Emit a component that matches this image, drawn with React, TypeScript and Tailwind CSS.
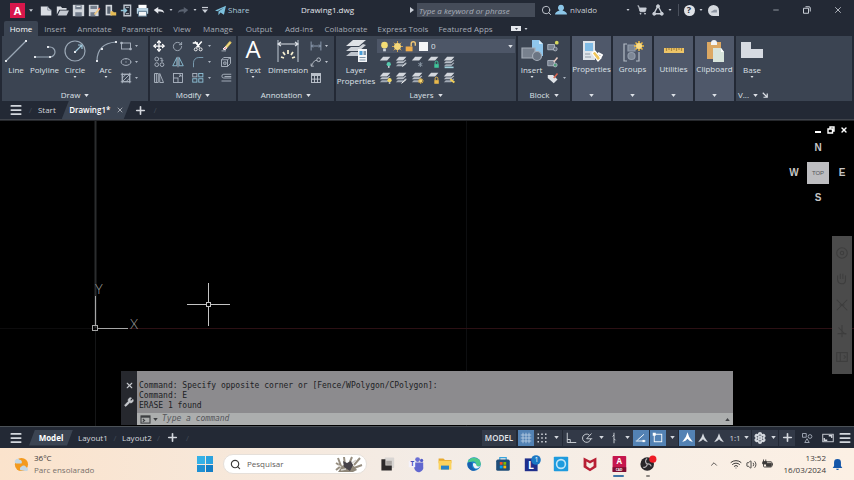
import type { ReactNode } from 'react';
import { Menu, Plus, X, Search, ShoppingCart, Move, RotateCw, Wifi, Volume2, Settings, Wrench, ChevronUp, Minus } from 'lucide-react';

const ribbonTabs = [
  { label: 'Home', width: 'w-[34px]' },
  { label: 'Insert', width: 'w-[34px]' },
  { label: 'Annotate', width: 'w-[45px]' },
  { label: 'Parametric', width: 'w-[50px]' },
  { label: 'View', width: 'w-[30px]' },
  { label: 'Manage', width: 'w-[42px]' },
  { label: 'Output', width: 'w-[40px]' },
  { label: 'Add-ins', width: 'w-[40px]' },
  { label: 'Collaborate', width: 'w-[54px]' },
  { label: 'Express Tools', width: 'w-[60px]' },
  { label: 'Featured Apps', width: 'w-[65px]' },
];

const history = [
  'Command: Specify opposite corner or [Fence/WPolygon/CPolygon]:',
  'Command: E',
  'ERASE 1 found',
];

type IconProps = { children: ReactNode; className?: string; box?: string };

function Icon({ children, className = 'w-3 h-3', box = '0 0 16 16' }: IconProps) {
  return (
    <svg viewBox={box} className={`shrink-0 ${className}`} fill="none" stroke="currentColor" strokeWidth="1.2" aria-hidden="true">
      {children}
    </svg>
  );
}

function Caret({ className = 'w-[5px] h-[3px]' }: { className?: string }) {
  return (
    <svg viewBox="0 0 6 4" className={`shrink-0 ${className}`} fill="currentColor" aria-hidden="true">
      <path d="M0 0h6L3 4z" />
    </svg>
  );
}

function Cell({ label, width = 'w-4', children, className = '' }: { label: string; width?: string; children: ReactNode; className?: string }) {
  return (
    <button aria-label={label} className={`flex h-4 shrink-0 items-center justify-center ${width} ${className}`}>
      {children}
    </button>
  );
}

function Panel({ title, width, children }: { title: string; width: string; children: ReactNode }) {
  return (
    <section className={`flex shrink-0 flex-col bg-[#3b4452] ${width}`}>
      <div className="flex flex-1">{children}</div>
      <button className="flex h-3 items-center justify-center gap-1 leading-3">
        {title}
        <Caret />
      </button>
    </section>
  );
}

function BigTool({ label, width, icon, caret = false }: { label: string; width: string; icon: ReactNode; caret?: boolean }) {
  return (
    <button className={`flex shrink-0 flex-col items-center self-start pt-[3px] ${width}`}>
      <span className="flex h-6 items-center">{icon}</span>
      <span className="mt-px text-center leading-[11px]">{label}</span>
      {caret && <Caret className="mt-[1px] h-[2px] w-[4px]" />}
    </button>
  );
}

function FoldedPanel({ label, icon }: { label: string; icon: ReactNode }) {
  return (
    <button className="flex w-[39px] shrink-0 flex-col items-center bg-[#4f586a] pt-[3px]">
      <span className="flex h-6 items-center">{icon}</span>
      <span className="leading-[11px]">{label}</span>
      <Caret className="mt-auto mb-1 h-[3px] w-[5px]" />
    </button>
  );
}

/* Ribbon glyphs */

const bulb = (x: number, y: number, color = '#f0d868') => (
  <g stroke="none">
    <circle cx={x} cy={y} r="2.6" fill={color} />
    <path d={`M${x - 1} ${y + 2.5}h2v2h-2z`} fill="#d6dae0" />
  </g>
);

const sun = (x: number, y: number) => (
  <g stroke="#f0b93e">
    <path d={`M${x} ${y - 3.6}v7.2M${x - 3.6} ${y}h7.2M${x - 2.5} ${y - 2.5}l5 5M${x + 2.5} ${y - 2.5}l-5 5`} />
    <circle cx={x} cy={y} r="1.8" fill="#f8d774" stroke="none" />
  </g>
);

const lock = (x: number, y: number, color: string) => (
  <g>
    <path d={`M${x + 1} ${y}v-2a1.7 1.7 0 0 1 3.4 0v2`} stroke={color} />
    <rect x={x} y={y} width="5.5" height="4.5" fill={color} stroke="none" />
  </g>
);

function LayerIcon({ stack = 1, children }: { stack?: number; children?: ReactNode }) {
  return (
    <Icon className="h-[13px] w-[13px]">
      <g stroke="none" fill="#d3d7dd">
        <path d="M5 1h9l-4 4.500H1z" />
        {stack > 1 && <path d="M3.500 6.500h7l2-2 1.500.5-4 4H1z" fill="#b9bfc8" />}
        {stack > 2 && <path d="M3.500 10h7l2-2 1.500.5-4 4H1z" fill="#a3abb6" />}
      </g>
      {children}
    </Icon>
  );
}

const drawSmall = [
  { label: 'Rectangle', art: <><rect x="2" y="4" width="12" height="8" /><path d="M1 3h2v2H1zM13 11h2v2h-2z" fill="currentColor" /></> },
  { label: 'Ellipse', art: <><ellipse cx="8" cy="8" rx="6.500" ry="4.500" /><path d="M7.500 8h1M7.500 3.500h1M14 8h1" strokeWidth="2" /></> },
  { label: 'Hatch', art: <><rect x="3" y="3" width="10" height="10" /><path d="M1 3h14M1 13h14M3 1v14M13 1v14M3 8l5-5M3 13L13 3M8 13l5-5" /></> },
];

const modifySmall = [
  { label: 'Move', art: <Move className="h-3 w-3 text-white" strokeWidth={2.5} /> },
  { label: 'Rotate', art: <RotateCw className="h-[11px] w-[11px]" strokeWidth={1.8} /> },
  { label: 'Trim', art: <Icon><path d="M4 2l6 8M13 2L6 10M1 4h7" strokeWidth="2" stroke="#fff" /><circle cx="5" cy="12.500" r="2" stroke="#fff" /><circle cx="11.500" cy="12.500" r="2" stroke="#fff" /></Icon>, caret: true },
  { label: 'Erase', art: <Icon><path d="M7 9l6-7 2 1.500-6 7z" fill="#f0dc8a" stroke="#e7c75b" /><path d="M4 12l3-3 2 1.500L7 13z" fill="#e58d9a" stroke="#fff" /><path d="M2 14.500h6" /></Icon> },
  { label: 'Copy', art: <Icon><circle cx="5" cy="4" r="2.500" /><circle cx="12" cy="11.500" r="2.500" /><circle cx="5" cy="11.500" r="2.500" /><path d="M9 3h3v4M10.500 5.500L12 7.500l1.500-2" /></Icon> },
  { label: 'Mirror', art: <Icon><path d="M6.500 2v11H1zM9.500 2v11H15z" stroke="#8fc3d8" /><path d="M8 1v14" /></Icon> },
  { label: 'Fillet', art: <Icon><path d="M2 15V9a7 7 0 0 1 7-7h6" stroke="#7fa3b8" /></Icon>, caret: true },
  { label: 'Explode', art: <Icon><path d="M2 5h8v9H2zM2 5l3-3h9v8l-4 4M10 5l4-3M5 8h3v3H5z" /></Icon> },
  { label: 'Stretch', art: <Icon><path d="M2 2h5v12H2zM9 2l5 12H9zM4.500 2v12" /></Icon> },
  { label: 'Scale', art: <Icon><rect x="2" y="2" width="12" height="12" /><path d="M2 8h6v6M9 7l3-3M9.500 4H12v2.500" /></Icon> },
  { label: 'Array', art: <Icon><rect x="1" y="2" width="5.500" height="4.500" /><rect x="9" y="2" width="5.500" height="4.500" stroke="#8fc3d8" /><rect x="1" y="9" width="5.500" height="4.500" stroke="#8fc3d8" /><rect x="9" y="9" width="5.500" height="4.500" stroke="#8fc3d8" /></Icon>, caret: true },
  { label: 'Offset', art: <Icon><path d="M15 3H5a2.500 2.500 0 0 0 0 5h10M15 6H6M2 12h13" /></Icon> },
];

const annotationSmall = [
  { label: 'Linear', art: <path d="M1.500 2v12M14.500 2v12M2 8h12M4 6L2 8l2 2M12 6l2 2-2 2" stroke="#93a3b8" />, caret: true },
  { label: 'Leader', art: <><circle cx="11.500" cy="5" r="2.500" /><path d="M9 6C6 5 4 9 2 13M1.500 10v3.500H5" /></>, caret: true },
  { label: 'Table', art: <><rect x="2" y="2" width="12" height="12" /><path d="M2 4h12" strokeWidth="2.500" /><path d="M2 9.500h12M6 5v9M10 5v9" /></> },
];

const layerTools = [
  { label: 'Off', art: <LayerIcon>{bulb(12, 10, '#58c9ae')}</LayerIcon> },
  { label: 'Isolate', art: <LayerIcon stack={3}><path d="M9 13l5-4" stroke="#e4e8ed" /></LayerIcon> },
  { label: 'Freeze', art: <LayerIcon><path d="M11.500 7.500v6M9 9l5 3M14 9l-5 3" stroke="#8b98a6" /></LayerIcon> },
  { label: 'Lock', art: <LayerIcon>{lock(9, 10, '#3fc59a')}</LayerIcon> },
  { label: 'Make Current', art: <LayerIcon stack={3}><path d="M2 14h11" stroke="#9fd0dc" strokeWidth="2" /></LayerIcon> },
  { label: 'Turn All On', art: <LayerIcon stack={3}>{bulb(13, 10)}</LayerIcon> },
  { label: 'Unisolate', art: <LayerIcon stack={3}><path d="M8 14l6-5" stroke="#fff" /></LayerIcon> },
  { label: 'Thaw All', art: <LayerIcon stack={3}>{sun(12, 11)}</LayerIcon> },
  { label: 'Unlock', art: <LayerIcon>{lock(9, 10, '#e9b84b')}</LayerIcon> },
  { label: 'Match Layer', art: <LayerIcon stack={3}><path d="M9 9l5 4" stroke="#f0cf58" strokeWidth="2.500" /></LayerIcon> },
];

function Annot({ className }: { className?: string }) {
  return <Icon className={className}><path d="M8 1.500L10 7l4.500 6.500-4-1.500L8 9.500 5.500 12l-4 1.500L6 7z" fill="currentColor" stroke="none" /></Icon>;
}

function TitleBar() {
  return (
    <header className="flex h-5 items-center">
      <button aria-label="Application menu" className="ml-[10px] flex h-[15px] w-[15px] items-center justify-center bg-[#d8174b] text-[11px] leading-none font-bold text-white">
        A
      </button>
      <Cell label="Menu options" width="w-3"><Caret className="h-[3px] w-[4px]" /></Cell>
      <div className="ml-px flex">
        <Cell label="New"><Icon className="h-[13px] w-[13px]"><path d="M1 3h8l5 5v6H1z" fill="#d9dde3" stroke="none" /><path d="M9.500 3v4.500H14" stroke="#8f98a5" /></Icon></Cell>
        <Cell label="Open"><Icon className="h-[13px] w-[13px]"><path d="M1 3h5l1.500 2H13v2H4l-3 6z" fill="#d9dde3" stroke="none" /><path d="M5 8h11l-3 6H2z" fill="#c5cad2" stroke="none" /></Icon></Cell>
        <Cell label="Save"><Icon className="h-[13px] w-[13px]"><path d="M1 1h14v14H1z" fill="#d2d6dc" stroke="none" /><path d="M4 1.500h8v5H4zM4 10h8v5H4z" fill="#747e8d" stroke="none" /><path d="M5.500 3h5" stroke="#e8ebee" /></Icon></Cell>
        <Cell label="Save As"><Icon className="h-[13px] w-[13px]"><path d="M1 1h12v14H1z" fill="#d2d6dc" stroke="none" /><path d="M3 2h8v4H3zM3 10h6v5H3z" fill="#747e8d" stroke="none" /><path d="M8 13l6-7" stroke="#f0c983" strokeWidth="2" /><path d="M13 5l1.500 1.500" stroke="#d75c50" strokeWidth="2" /></Icon></Cell>
        <Cell label="Open from web"><Icon className="h-[13px] w-[13px]"><path d="M2 1h8v13H2z" fill="#d2d6dc" stroke="none" /><path d="M4 3h4v9H4z" fill="#5a6472" stroke="none" /><path d="M8 9h3l1 1h3v4H8z" fill="#e7bd55" stroke="none" /></Icon></Cell>
        <Cell label="Save to web"><Icon className="h-[13px] w-[13px]"><path d="M5 1.500h8v13H5z" strokeWidth="1.800" stroke="#bfc5ce" /><path d="M7 4h4M7 12h4" /><path d="M1 8h7M5.500 5.500L8 8l-2.500 2.500" stroke="#8fc3d8" strokeWidth="1.800" /></Icon></Cell>
        <Cell label="Plot"><Icon className="h-[13px] w-[13px]"><path d="M3 1h10v4H3z" fill="#fff" stroke="none" /><path d="M1 5h14v7H1z" fill="#bcd6e6" stroke="none" /><path d="M3 9h10v6H3z" fill="#f4f6f8" stroke="#56738a" /></Icon></Cell>
      </div>
      <Cell label="Undo" className="ml-px"><Icon className="h-3 w-3"><path d="M1 8l6-4v3c5 0 7 1 8 5-2-2-4-2-8-2v3z" fill="#e4e7ec" stroke="none" /></Icon></Cell>
      <Cell label="Undo list" width="w-2"><Caret className="h-[2px] w-[4px]" /></Cell>
      <Cell label="Redo" className="text-[#59616f]"><Icon className="h-3 w-3"><path d="M15 8L9 4v3c-5 0-7 1-8 5 2-2 4-2 8-2v3z" fill="currentColor" stroke="none" /></Icon></Cell>
      <Cell label="Redo list" width="w-2"><Caret className="h-[2px] w-[4px]" /></Cell>
      <Cell label="Customize" width="w-3"><Icon className="h-2 w-2" box="0 0 8 8"><path d="M1 1.500h6" /><path d="M1 3.500h6L4 7z" fill="currentColor" stroke="none" /></Icon></Cell>
      <button className="ml-1 flex items-center gap-[2px] text-[#a9c8da]">
        <Icon className="h-[11px] w-[11px]"><path d="M0 8l16-7-3 13-5-3-3 4V9.500L13 4 3.500 9z" fill="#7cc0dd" stroke="none" /></Icon>
        Share
      </button>
      <h1 className="ml-auto pr-[54px] font-normal text-[#e4e7ec]">Drawing1.dwg</h1>
      <div className="flex w-[446px] shrink-0 items-center">
        <Cell label="Collapse search" width="w-2"><Icon className="h-[6px] w-1" box="0 0 4 6"><path d="M0 0l4 3-4 3z" fill="currentColor" stroke="none" /></Icon></Cell>
        <input aria-label="Search help" placeholder="Type a keyword or phrase" className="mr-[3px] ml-px h-[14px] w-[118px] shrink-0 bg-[#454c59] px-[2px] italic outline-none placeholder:text-[#a9afb9]" />
        <Cell label="Search"><Search className="h-[11px] w-[11px]" /></Cell>
        <button className="ml-px flex items-center gap-[3px]">
          <Icon className="h-3 w-3"><path d="M8 1a4 4 0 0 1 2 7.500c4 1 6 3 6 5.500H0c0-2.500 2-4.500 6-5.500A4 4 0 0 1 8 1z" fill="#8cc6e8" stroke="none" /></Icon>
          nivaldo
        </button>
        <div className="ml-auto flex items-center">
          <Cell label="Account options" width="w-2"><Caret className="h-[2px] w-[4px]" /></Cell>
          <Cell label="App Store" className="ml-[2px]"><ShoppingCart className="h-[10px] w-[10px]" fill="currentColor" /></Cell>
          <Cell label="Autodesk App"><Icon className="h-3 w-3"><path d="M8 2.500L2.500 13h11z" strokeWidth="1.800" /><circle cx="8" cy="3" r="2" fill="currentColor" /><circle cx="3" cy="13" r="2" fill="currentColor" /><circle cx="13" cy="13" r="2" fill="currentColor" /></Icon></Cell>
          <Cell label="App options" width="w-2"><Caret className="h-[2px] w-[4px]" /></Cell>
          <span className="mr-[2px] ml-1 h-3 w-px bg-[#4a505c]" />
          <Cell label="Help"><span className="flex h-[11px] w-[11px] items-center justify-center rounded-full bg-[#dfe2e7] text-[9px] font-bold text-[#2a303c]">?</span></Cell>
          <Cell label="Help options" width="w-2"><Caret className="h-[2px] w-[4px]" /></Cell>
          <Cell label="Feedback"><Icon className="h-[11px] w-[11px]"><path d="M8 0a8 8 0 1 0 0 16h8V8a8 8 0 0 0-8-8z" fill="#d5d9df" stroke="none" /><path d="M4 10l5-3h4v4H5z" fill="#8c94a1" stroke="none" /></Icon></Cell>
          <Cell label="Minimize" className="ml-[47px]"><Minus className="h-2 w-2" /></Cell>
          <Cell label="Restore" className="ml-[15px]"><Icon className="h-2 w-2"><path d="M1 4.500h10v10H1z" strokeWidth="2" /><path d="M5 1.500h7a2.500 2.500 0 0 1 2.500 2.500v7" strokeWidth="2" /></Icon></Cell>
          <Cell label="Close" className="mr-2 ml-[15px]"><X className="h-[10px] w-[10px]" /></Cell>
        </div>
      </div>
    </header>
  );
}

function Ribbon() {
  return (
    <div className="flex h-[65px] gap-[2px] px-[2px] text-[#dde1e7]">
      <Panel title="Draw" width="w-[146px]">
        <BigTool label="Line" width="w-7" icon={<Icon className="h-[22px] w-[22px]" box="0 0 22 22"><path d="M1 21L21 1" stroke="#9aa7b5" /><path d="M0 20h2v2H0zM20 0h2v2h-2z" fill="#e0e4e9" stroke="none" /></Icon>} />
        <BigTool label="Polyline" width="w-[29px]" icon={<Icon className="h-[22px] w-[22px]" box="0 0 22 22"><path d="M1 17h15a5 5 0 0 0 0-10h-2" stroke="#9aa7b5" /><path d="M0 16h2v2H0zM13 6h2v2h-2zM15 16h2v2h-2z" fill="#e0e4e9" stroke="none" /></Icon>} />
        <BigTool label="Circle" width="w-[32px]" caret icon={<Icon className="h-[22px] w-[22px]" box="0 0 22 22"><circle cx="11" cy="11" r="10" stroke="#9aa7b5" /><path d="M11 12l7-7M18 9V5h-4" stroke="#9fc8dc" /><path d="M10 11h2v2h-2z" fill="#e0e4e9" stroke="none" /></Icon>} />
        <BigTool label="Arc" width="w-[29px]" caret icon={<Icon className="h-[22px] w-[22px]" box="0 0 22 22"><path d="M2 21C2 9 9 3 21 2" stroke="#9aa7b5" /><path d="M1 20h2v2H1zM20 1h2v2h-2zM6 8h2v2H6z" fill="#e0e4e9" stroke="none" /></Icon>} />
        <div className="flex flex-col pt-[2px] text-[#aeb7c3]">
          {drawSmall.map((tool) => (
            <Cell key={tool.label} label={tool.label} width="w-[18px]" className="gap-[3px]">
              <Icon>{tool.art}</Icon>
              <Caret className="h-[2px] w-[3px]" />
            </Cell>
          ))}
        </div>
      </Panel>

      <Panel title="Modify" width="w-[86px]">
        <div className="grid grid-cols-[18px_19px_28px_21px] self-start pt-[2px] text-[#aeb7c3]">
          {modifySmall.map((tool) => (
            <Cell key={tool.label} label={tool.label} width="w-full" className="gap-1">
              {tool.art}
              {tool.caret && <Caret className="h-[2px] w-[3px]" />}
            </Cell>
          ))}
        </div>
      </Panel>

      <Panel title="Annotation" width="w-[96px]">
        <BigTool label="Text" width="w-[30px]" caret icon={<span className="self-start text-[24px] leading-[20px] text-white">A</span>} />
        <BigTool
          label="Dimension"
          width="w-10"
          icon={<Icon className="h-[22px] w-[22px]" box="0 0 22 22"><path d="M1 0v22M21 0v22" stroke="#aab3be" /><path d="M1 4h20M4 2L1 4l3 2M18 2l3 2-3 2" stroke="#dde1e7" /><path d="M11 10v4M6 12l2 3M16 12l-2 3M4 17l3 1M18 17l-3 1" stroke="#f3edcf" strokeWidth="1.800" /></Icon>}
        />
        <div className="flex flex-col pt-[2px] text-[#c3c9d2]">
          {annotationSmall.map((tool) => (
            <Cell key={tool.label} label={tool.label} width="w-[22px]" className="justify-start gap-[3px] pl-[2px]">
              <Icon>{tool.art}</Icon>
              {tool.caret && <Caret className="h-[2px] w-[3px]" />}
            </Cell>
          ))}
        </div>
      </Panel>

      <Panel title="Layers" width="w-[180px]">
        <BigTool
          label="Layer Properties"
          width="w-10"
          icon={
            <Icon className="h-6 w-6" box="0 0 24 24">
              <g stroke="none">
                <path d="M9 1h13l-7 6H2z" fill="#e0e3e7" />
                <path d="M2 12l5-4h8l4-3 3 1-7 6z" fill="#cfd3d9" />
                <path d="M2 17l5-4h8l4-3 3 1-7 6z" fill="#bfc5cd" />
                <path d="M14 10h9v13h-9z" fill="#f4f6f8" />
                <path d="M15.500 12h3v4h-3z" fill="#4a9fd8" />
                <path d="M15.500 18h6v1h-6zM15.500 20.500h6v1h-6zM19.500 12h2.500v4h-2.500z" fill="#7d93a8" />
              </g>
            </Icon>
          }
        />
        <div className="flex flex-1 flex-col pt-[3px] pr-px pl-px">
          <div className="flex h-[14px] items-center bg-[#4d5667] pl-px">
            <Icon className="mx-px h-[11px] w-[11px]"><circle cx="8" cy="6" r="4.800" fill="#f3dc74" stroke="none" /><path d="M6 11h4v4H6z" fill="#cbd2da" stroke="none" /></Icon>
            <Icon className="mx-px h-[11px] w-[11px]"><path d="M8 0v16M0 8h16M2.500 2.500l11 11M13.500 2.500l-11 11" stroke="#eab04a" /><circle cx="8" cy="8" r="5" fill="#f5d77a" stroke="none" /></Icon>
            <Icon className="mx-px h-[11px] w-[11px]"><path d="M9 8V4a3 3 0 0 1 6 0v3" stroke="#f0c674" strokeWidth="2" /><path d="M1 8h10v7H1z" fill="#f0ad4a" stroke="none" /></Icon>
            <span className="mx-[2px] h-[9px] w-[9px] bg-[#f5f6f8]" />
            <select aria-label="Layer" className="h-[14px] flex-1 appearance-none bg-transparent pl-px leading-[14px] outline-none">
              <option>0</option>
            </select>
            <Caret className="mr-[2px] h-[3px] w-[5px]" />
          </div>
          <div className="grid grid-cols-[repeat(5,16px)] pt-px">
            {layerTools.map((tool) => (
              <Cell key={tool.label} label={tool.label}>{tool.art}</Cell>
            ))}
          </div>
        </div>
      </Panel>

      <Panel title="Block" width="w-[52px]">
        <BigTool
          label="Insert"
          width="w-[27px]"
          caret
          icon={
            <Icon className="h-[22px] w-[22px]" box="0 0 22 22">
              <path d="M11 0h7l4 4v12h-11z" fill="#8fc6ec" stroke="none" />
              <path d="M18 0v4h4z" fill="#d7ecf9" stroke="none" />
              <path d="M1 8h13v10H1z" fill="#78818e" stroke="#a5adb8" />
              <circle cx="16" cy="16" r="4.500" fill="#6b7583" stroke="#a5adb8" />
            </Icon>
          }
        />
        <div className="flex flex-col pt-[2px] text-[#aeb7c3]">
          <Cell label="Create Block"><Icon><path d="M1 6h9v7H1z" fill="#7a8492" /><circle cx="11" cy="12" r="2.500" fill="#5f6876" /><circle cx="13" cy="3.500" r="2.500" fill="#d8d95e" stroke="none" /></Icon></Cell>
          <Cell label="Edit Block"><Icon><path d="M1 6h9v7H1z" fill="#7a8492" /><circle cx="11" cy="12" r="2.500" fill="#4f9f78" /><path d="M9 8l5-6" stroke="#e8c9c0" strokeWidth="2" /></Icon></Cell>
          <Cell label="Edit Attributes" width="w-[23px]" className="gap-1"><Icon><path d="M1 4h7l6 6-5 5-8-7z" fill="#dfe3e8" stroke="none" /><path d="M9 8l5-6" stroke="#d9644f" strokeWidth="2" /></Icon><Caret className="h-[2px] w-[3px]" /></Cell>
        </div>
      </Panel>

      <FoldedPanel
        label="Properties"
        icon={
          <Icon className="h-[22px] w-[22px]" box="0 0 22 22">
            <path d="M2 1h12v19H2z" fill="#dfe4ea" stroke="none" />
            <path d="M4 3h8v8H4z" fill="#7fbbe6" stroke="none" />
            <path d="M4 14h5M4 17h6" stroke="#9099a6" />
            <path d="M11 13l3-2 6 7-3 3z" fill="#f0c65c" stroke="#fff" />
            <path d="M17 13l4 2-2 3" stroke="#fff" strokeWidth="2" />
          </Icon>
        }
      />
      <FoldedPanel
        label="Groups"
        icon={
          <Icon className="h-[22px] w-[22px]" box="0 0 22 22">
            <path d="M5 4H2v17h3M14 21h3v-9" stroke="#b4bbc6" />
            <path d="M6 5h7v6H6z" fill="#7d8796" stroke="#929cab" />
            <circle cx="9.500" cy="16" r="3.500" fill="#7d8796" stroke="#929cab" />
            <path d="M17 1v10M12 6h10M13.500 2.500l7 7M20.500 2.500l-7 7" stroke="#f0b93e" strokeWidth="1.500" />
            <circle cx="17" cy="6" r="3" fill="#f9dc87" stroke="none" />
          </Icon>
        }
      />
      <FoldedPanel
        label="Utilities"
        icon={<Icon className="h-[22px] w-[22px]" box="0 0 22 22"><path d="M1 8h20v5H1z" fill="#eec568" stroke="none" /><path d="M3.500 8v3M6 8v2M8.500 8v3M11 8v2M13.500 8v3M16 8v2M18.500 8v3" stroke="#b08a3c" /></Icon>}
      />
      <FoldedPanel
        label="Clipboard"
        icon={
          <Icon className="h-[22px] w-[22px]" box="0 0 22 22">
            <path d="M3 2h14v17H3z" fill="#dca863" stroke="none" />
            <path d="M7 3a3 3 0 0 1 6 0v2H7z" fill="#f2f4f6" stroke="none" />
            <path d="M9 8h8l3 4v10H9z" fill="#d8e4dc" stroke="none" />
            <path d="M17 8v4h3z" fill="#fff" stroke="none" />
          </Icon>
        }
      />

      <section className="flex flex-1 flex-col bg-[#3b4452]">
        <div className="flex-1">
          <BigTool label="Base" width="w-8" caret icon={<Icon className="h-[22px] w-[22px]" box="0 0 22 22"><path d="M0 2h10v7h12v9H0z" fill="#d6dae1" stroke="none" /></Icon>} />
        </div>
        <button className="flex h-3 items-center gap-1 pl-[2px] leading-3">
          V...
          <Caret />
          <Icon className="h-[6px] w-[6px]" box="0 0 8 8"><path d="M1 1l5 5M7 2v5H2" strokeWidth="1.600" /></Icon>
        </button>
      </section>
    </div>
  );
}

function FileTabs() {
  return (
    <nav className="flex h-[19px] items-center border-b border-[#3f434b] text-[#d4d8de]">
      <Cell label="File tabs menu" className="ml-2"><Menu className="h-[14px] w-[14px]" strokeWidth={3} /></Cell>
      <span className="ml-[5px] text-[#414957]">/</span>
      <a href="#start" className="ml-[6px]">Start</a>
      <div className="ml-[6px] flex h-[18px] w-[69px] items-center justify-center gap-[6px] bg-[#3b4452] pl-px [clip-path:polygon(7px_0,100%_0,calc(100%-7px)_100%,0_100%)]">
        <a href="#drawing1" className="font-semibold text-white">Drawing1*</a>
        <button aria-label="Close Drawing1"><X className="h-2 w-2" /></button>
      </div>
      <Cell label="New drawing" className="ml-[2px]"><Plus className="h-[13px] w-[13px]" strokeWidth={3} /></Cell>
      <span className="ml-[5px] text-[#414957]">/</span>
    </nav>
  );
}

function DrawingArea() {
  return (
    <main className="relative flex-1 overflow-hidden border-t border-[#25272b] bg-black">
      <svg className="absolute inset-0 h-full w-full" fill="none" aria-label="Drawing area">
        <path d="M95.500 0V207" stroke="#2b2d2e" strokeWidth="2" />
        <path d="M95.500 207V306" stroke="#151617" />
        <path d="M466.500 0V306" stroke="#0d0e10" />
        <line x1="0" y1="207.500" x2="100%" y2="207.500" stroke="#0d0c0d" />
        <line x1="129" y1="207.500" x2="100%" y2="207.500" stroke="#2c1014" />
        <g stroke="#a6a6a6">
          <rect x="92.500" y="204.500" width="5" height="5" />
          <path d="M95.500 175V204M98 207.500H128" />
        </g>
        <g stroke="#c4c4c4">
          <path d="M187 183.500H206M211 183.500H230M208.500 162V181M208.500 186V205" />
          <rect x="206.500" y="181.500" width="4" height="4" />
        </g>
        <g fill="#a2a2a2" className="font-['Lato',sans-serif] text-[13px] font-light">
          <text x="95" y="173">Y</text>
          <text x="130" y="208">X</text>
        </g>
      </svg>

      <div className="absolute top-[5px] right-[6px] flex gap-[5px] text-white">
        <button aria-label="Minimize drawing"><Icon className="h-2 w-2" box="0 0 8 8"><path d="M1 6h6" strokeWidth="2" /></Icon></button>
        <button aria-label="Restore drawing"><Icon className="h-2 w-2" box="0 0 8 8"><path d="M1 3h4.500v4H1zM3 3V1h4v4H5.500" strokeWidth="1.400" /></Icon></button>
        <button aria-label="Close drawing"><X className="h-2 w-2" strokeWidth={4} /></button>
      </div>

      <div className="absolute top-[21px] right-1 grid grid-cols-[16px_24px_16px] items-center justify-items-center gap-x-1 font-['Liberation_Sans',sans-serif] text-[10px] leading-3 font-bold text-[#c6c6c6]">
        <span className="col-start-2">N</span>
        <span className="col-start-1">W</span>
        <button className="my-2 h-[22px] w-[22px] bg-[#bdbdc0] text-[6px] font-normal text-[#55565a]">TOP</button>
        <span>E</span>
        <span className="col-start-2">S</span>
      </div>

      <div className="absolute top-[115px] right-[2px] flex h-[138px] w-5 flex-col items-center justify-around bg-[#4b4b4b] py-1 text-[#3d3d3d]">
        <Icon className="h-[14px] w-[14px]"><circle cx="8" cy="8" r="6" /><circle cx="8" cy="8" r="2" /></Icon>
        <Icon className="h-[14px] w-[14px]"><path d="M3 9V4M6 8V2M9 8V2M12 9V4M3 9c1 6 9 6 9 0" /></Icon>
        <Icon className="h-[14px] w-[14px]"><path d="M2 2l12 12M14 2L2 14M5 8h6" /></Icon>
        <Icon className="h-[14px] w-[14px]"><path d="M8 1v14M4 4l8 8M3 11h10" /></Icon>
        <Icon className="h-[14px] w-[14px]"><rect x="2" y="3" width="12" height="10" /><path d="M6 3v10M10 6l2 2-2 2" /></Icon>
      </div>

      <section className="absolute right-[121px] bottom-[1px] left-[121px] flex bg-[#8c8b8e] font-['DejaVu_Sans_Mono',monospace]">
        <div className="flex w-4 flex-col items-center gap-[7px] bg-[#26282e] pt-[10px] text-[#c5c8cd]">
          <button aria-label="Close command line"><X className="h-[9px] w-[9px]" strokeWidth={3} /></button>
          <button aria-label="Customize command line"><Wrench className="h-[10px] w-[10px]" fill="currentColor" /></button>
        </div>
        <div className="flex-1">
          <div className="h-[42px] pt-[10px] pl-[2px] leading-[10px] text-[#202124]">
            {history.map((line) => <p key={line}>{line}</p>)}
          </div>
          <label className="flex h-3 items-center bg-[#acaeae] pl-[3px] text-[#3d3f42]">
            <Icon className="h-[9px] w-[11px]" box="0 0 12 10"><rect x="1" y="1" width="10" height="8" /><path d="M1 2h10" strokeWidth="2" /><path d="M3 4.500l2 1.500-2 1.500" /></Icon>
            <Caret className="ml-[2px] h-[3px] w-[5px]" />
            <input aria-label="Command" placeholder="Type a command" className="ml-1 h-3 flex-1 bg-transparent italic outline-none placeholder:text-[#54565a]" />
            <Icon className="mr-[3px] h-[3px] w-[5px]" box="0 0 6 4"><path d="M0 4h6L3 0z" fill="currentColor" stroke="none" /></Icon>
          </label>
        </div>
      </section>
    </main>
  );
}

function StatusBar() {
  const on = 'bg-[#5382b4] text-white';
  const off = 'bg-[#323947]';
  return (
    <div className="flex h-[22px] items-center border-t border-[#4b5157] text-[#d4d8de]">
      <Cell label="Layout menu" className="ml-2"><Menu className="h-[14px] w-[14px]" strokeWidth={3} /></Cell>
      <nav className="ml-[5px] flex items-center">
        <a href="#model" className="flex h-4 w-[44px] items-center justify-center bg-[#3b4452] font-bold text-white [clip-path:polygon(6px_0,100%_0,calc(100%-6px)_100%,0_100%)]">Model</a>
        <a href="#layout1" className="ml-[5px] w-[30px]">Layout1</a>
        <span className="w-[14px] text-center text-[#414957]">/</span>
        <a href="#layout2" className="w-[30px]">Layout2</a>
        <span className="ml-[5px] text-[#414957]">/</span>
      </nav>
      <Cell label="New layout" className="ml-[5px]"><Plus className="h-[13px] w-[13px]" strokeWidth={3} /></Cell>
      <span className="ml-[5px] text-[#414957]">/</span>

      <div className="ml-auto flex items-center pr-[2px]">
        <button className={`mr-[2px] h-4 w-[34px] font-semibold text-[#e4e7ec] ${off}`}>MODEL</button>
        <Cell label="Grid" className={on}><Icon><path d="M4 1v14M8 1v14M12 1v14M1 4h14M1 8h14M1 12h14" strokeWidth="1" stroke="#c3d6e8" /></Icon></Cell>
        <Cell label="Snap" className={off}><Icon><path d="M2 3h12M2 8h12M2 13h12" strokeWidth="2" strokeDasharray="2 3" /></Icon></Cell>
        <Cell label="Snap options" width="w-3" className={`mr-px ${off}`}><Caret /></Cell>
        <Cell label="Ortho" className={off}><Icon><path d="M3 1v13h12M3 10h4v4" /></Icon></Cell>
        <Cell label="Polar" className={off}><Icon><path d="M13 9a5.500 5.500 0 1 1-2-5M7.500 9L14 2M7.500 9H15" /></Icon></Cell>
        <Cell label="Polar options" width="w-3" className={off}><Caret /></Cell>
        <Cell label="Isodraft" width="w-[14px]" className={off}><Icon><path d="M8 1v14M6 6l2-2M8 9l2 2" /></Icon></Cell>
        <Cell label="Isodraft options" width="w-3" className={off}><Caret /></Cell>
        <Cell label="Snap tracking" className={`mr-px ${on}`}><Icon><path d="M1 12h13M3 11l9-8" /><path d="M10 12h3" strokeWidth="3" /></Icon></Cell>
        <Cell label="Object snap" className={on}><Icon><rect x="3" y="3" width="10" height="10" /><path d="M1 1h4v4H1z" fill="currentColor" stroke="none" /></Icon></Cell>
        <Cell label="Object snap options" width="w-3" className={`mr-px ${off}`}><Caret /></Cell>
        <Cell label="Annotation visibility" className={on}><Annot className="h-[13px] w-[13px]" /></Cell>
        <Cell label="Auto scale" className={off}><Annot className="h-3 w-3" /></Cell>
        <Cell label="Annotation scale" className={off}><Annot className="h-3 w-3" /></Cell>
        <button className={`flex h-4 w-[24px] items-center justify-center gap-[3px] ${off}`}>1:1<Caret /></button>
        <Cell label="Workspace" className={`ml-px ${off}`}><Settings className="h-3 w-3" strokeWidth={4} /></Cell>
        <Cell label="Workspace options" width="w-[10px]" className={off}><Caret /></Cell>
        <Cell label="Monitor" className={`mr-1 ml-px ${off}`}><Plus className="h-[13px] w-[13px]" strokeWidth={3} /></Cell>
        <Cell label="Isolate objects" className="mr-[5px] text-[#a5adb9]"><Icon><path d="M2 2h5v5H2zM5 14l3-5 3 5z" /><circle cx="12" cy="6" r="2.500" /></Icon></Cell>
        <Cell label="Clean screen" className="mr-[2px]"><Icon><rect x="1" y="3" width="14" height="10" /><path d="M9 5h4v3M7 11H3V8" strokeWidth="1.800" /></Icon></Cell>
        <Cell label="Customization" width="w-[14px]"><Menu className="h-[14px] w-[14px]" strokeWidth={3} /></Cell>
      </div>
    </div>
  );
}

const taskbarApps = [
  { name: 'Task view', art: <><rect x="7" y="2" width="12" height="13" rx="1" fill="#d9d6d3" /><path d="M3 4h5v8h8v6H3z" fill="#2d2a2a" /><path d="M9 6h7v5H9z" fill="#a9a5a2" /></> },
  { name: 'Teams', art: <><circle cx="12" cy="4.500" r="3" fill="#6a6fd4" /><circle cx="17" cy="5.500" r="2" fill="#5059c9" /><path d="M7 8h12v5a5 5 0 0 1-11 3z" fill="#6167cf" /><path d="M1 6h8v8H1z" fill="#f4f2fb" /><text x="3" y="13" fontSize="8" fontWeight="700" fill="#464eb8">T</text></> },
  { name: 'Explorer', art: <><path d="M2 3h6l2 2h8v4H2z" fill="#e7a92e" /><path d="M2 6h16v11H2z" fill="#fbd35c" /><path d="M5 12h10v5H5z" fill="#2784c7" /></> },
  { name: 'Edge', art: <><circle cx="10" cy="10" r="8.500" fill="#1d86cf" /><path d="M2 8a8.500 8.500 0 0 1 16.500 2c0 3-4 4-6 2 1-3-1-5-4-5S3 8 2 8z" fill="#4cc98c" /><path d="M8 9c-2 4 1 8 6 8-6 4-13-1-12-8 2-2 5-2 6 0z" fill="#1a5fae" /><path d="M9 9a3 3 0 0 1 4 3c2 2 4 1 5 0-1 3-4 4-6 3.500S8 12 9 9z" fill="#f0f4f6" /></> },
  { name: 'Store', art: <><path d="M6 5V2h8v3" stroke="#37a3dd" strokeWidth="1.500" fill="none" /><rect x="1.500" y="4.500" width="17" height="14" rx="2" fill="#1f4d78" /><path d="M6 7.500h3.500V11H6z" fill="#f25022" /><path d="M10.500 7.500H14V11h-3.500z" fill="#7fba00" /><path d="M6 12h3.500v3.500H6z" fill="#00a4ef" /><path d="M10.500 12H14v3.500h-3.500z" fill="#ffb900" /></> },
  { name: 'LockDown', art: <><rect x="1" y="3" width="16" height="16" fill="#1f2f8c" /><text x="5" y="16" fontSize="13" fontWeight="700" fill="#fff">L</text><circle cx="15" cy="5" r="6" fill="#1b78c4" /><text x="13" y="8" fontSize="9" fill="#fff">1</text></> },
  { name: 'Assistant', art: <><rect x="1" y="1" width="18" height="18" rx="1" fill="#1e9bde" /><circle cx="10" cy="10" r="5.500" fill="none" stroke="#bfe4f7" strokeWidth="2" /></> },
  { name: 'McAfee', art: <path d="M2 2l8 4 8-4v12l-8 5-8-5zM5.500 7v5.500L10 15.500l4.500-3V7L10 9.500z" fill="#b81f34" /> },
  { name: 'AutoCAD', art: <><rect x="2" y="0" width="17" height="20" rx="1" fill="#c5164d" /><path d="M2 14h17v6H2z" fill="#7e0f33" /><text x="7" y="10" fontSize="10" fontWeight="700" fill="#fff">A</text><text x="6" y="19" fontSize="4" fontWeight="700" fill="#fff">CAD</text></>, mark: 'w-[11px] bg-[#3f76a8]' },
  { name: 'OBS', art: <><circle cx="9" cy="10" r="8.500" fill="#28262a" /><g fill="none" stroke="#b9b6ba" strokeWidth="1.400"><path d="M9 3a4 4 0 0 0 0 7M14 13a4 4 0 0 0-5-3M4 14a4 4 0 0 0 5-4" /></g><circle cx="16" cy="4" r="4.500" fill="#ee1c25" /></>, mark: 'w-1 bg-[#8d8782]' },
];

function Taskbar() {
  return (
    <footer className="flex h-8 items-center bg-gradient-to-r from-[#fbe3cc] via-[#f3ece6] to-[#fcf0e4] text-[#3c3a39]">
      <button className="flex w-[190px] items-center gap-[5px] pl-3 text-left leading-3">
        <Icon className="h-[17px] w-[17px]" box="0 0 18 18">
          <circle cx="10" cy="9" r="7" fill="#f39a1f" stroke="none" />
          <path d="M3 7a3 3 0 0 1 5-3 2.500 2.500 0 0 1 2 4H4zM9 15a2.500 2.500 0 0 1 1-4 3 3 0 0 1 5 1 2 2 0 0 1 0 4z" fill="#c3d7e6" stroke="none" />
        </Icon>
        <span>
          <span className="block">36°C</span>
          <span className="block text-[#77706a]">Parc ensolarado</span>
        </span>
      </button>
      <button aria-label="Start" className="ml-[7px] grid h-4 w-4 shrink-0 grid-cols-2 gap-px">
        <span className="bg-[#35b1e6]" /><span className="bg-[#2ba2de]" /><span className="bg-[#1f90d3]" /><span className="bg-[#147ec6]" />
      </button>
      <label className="ml-[10px] flex h-5 w-[144px] shrink-0 items-center rounded-full border border-[#e6e0da] bg-white pr-[2px] pl-[6px]">
        <Search className="h-[11px] w-[11px] shrink-0" strokeWidth={2.5} />
        <input aria-label="Pesquisar" placeholder="Pesquisar" className="ml-[6px] w-0 flex-1 bg-transparent outline-none placeholder:text-[#5f5c5a]" />
        <Icon className="h-[18px] w-[32px]" box="0 0 32 18">
          <path d="M4 15l5-4-5-3M9 11L6 3M13 10l-1-8M17 9l3-7M22 10l6-7M22 13l8-3" stroke="#978e80" strokeWidth="2" />
          <path d="M6 17l4-6 5-3 5 1 5 6-4 2z" fill="#8f8779" stroke="none" />
          <path d="M11 6l4 2 4-2 2 4-3 6-6-4z" fill="#474349" stroke="none" />
          <path d="M6 10l3 2M20 8l4-3M9 15l5-1" stroke="#d7d4cf" strokeWidth="1.500" />
        </Icon>
      </label>
      <div className="ml-[5px] flex shrink-0">
        {taskbarApps.map((app) => (
          <button key={app.name} aria-label={app.name} className="relative flex h-8 w-[29px] items-center justify-center">
            <Icon className="h-4 w-4 overflow-visible" box="0 0 20 20"><g stroke="none">{app.art}</g></Icon>
            {app.mark && <span className={`absolute bottom-[3px] h-[2px] rounded-full ${app.mark}`} />}
          </button>
        ))}
      </div>
      <div className="ml-auto flex items-center pr-[10px]">
        <Cell label="Hidden icons"><ChevronUp className="h-[10px] w-[10px]" /></Cell>
        <Cell label="Network" className="ml-[6px]"><Wifi className="h-3 w-3" /></Cell>
        <Cell label="Volume"><Volume2 className="h-[11px] w-[11px]" /></Cell>
        <Cell label="Battery"><Icon><rect x="2" y="5" width="11" height="7" rx="1" /><path d="M6 7h6v4H6zM14 7v3" fill="currentColor" /><path d="M2 2v4M5 2v4M1 5h5v3H1z" fill="currentColor" /></Icon></Cell>
        <button className="ml-2 text-right leading-3">
          <span className="block">13:52</span>
          <span className="block">16/03/2024</span>
        </button>
        <Cell label="Notifications" width="w-[14px]" className="ml-1"><Icon className="h-[11px] w-[11px]"><path d="M8 0a5 5 0 0 1 5 5v5l2 3H1l2-3V5a5 5 0 0 1 5-5zM6 14h4a2 2 0 0 1-4 0z" fill="#1456a8" stroke="none" /></Icon></Cell>
      </div>
    </footer>
  );
}

export default function App() {
  return (
    <div className="flex min-h-screen flex-col bg-[#232935] font-['Open_Sans','Noto_Sans',sans-serif] text-[8px] text-[#c9ced6]">
      <TitleBar />
      <nav className="flex h-4 items-end pl-1">
        {ribbonTabs.map((tab, i) => (
          <button key={tab.label} className={`h-[15px] shrink-0 rounded-t-[2px] whitespace-nowrap ${tab.width} ${i === 0 ? 'bg-[#3b4452] text-white' : 'text-[#a5abb6]'}`}>
            {tab.label}
          </button>
        ))}
        <button aria-label="Ribbon display" className="ml-[13px] flex h-[15px] items-center gap-[3px]">
          <span className="flex h-[5px] w-[10px] items-center justify-center bg-[#e4e7ec]"><Caret className="h-[2px] w-[3px] text-[#4a505c]" /></span>
          <Caret className="h-[2px] w-[4px]" />
        </button>
      </nav>
      <Ribbon />
      <FileTabs />
      <DrawingArea />
      <StatusBar />
      <Taskbar />
    </div>
  );
}
